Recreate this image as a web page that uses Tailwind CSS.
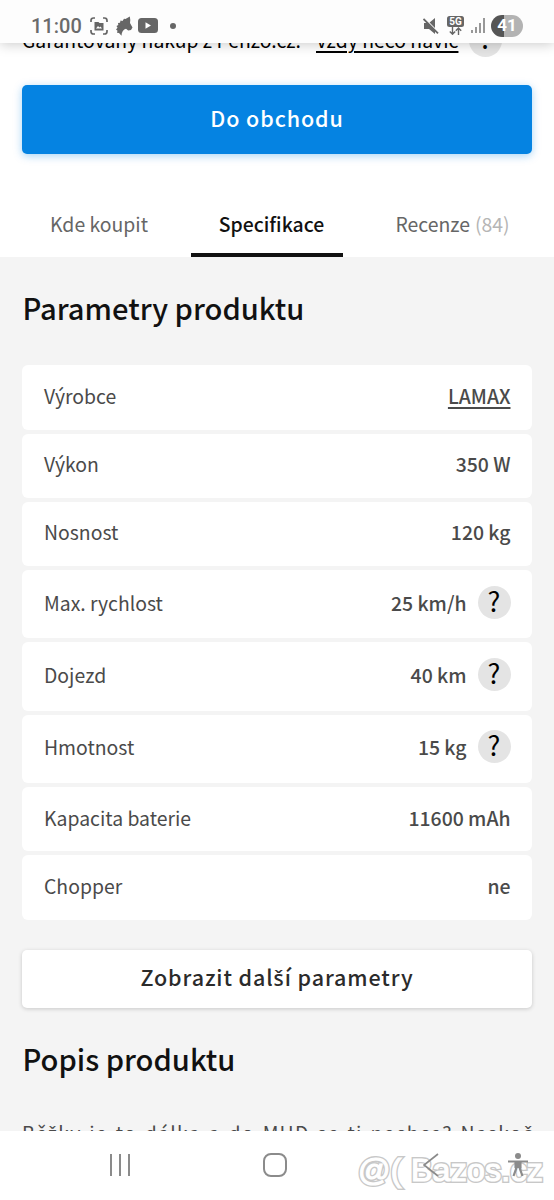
<!DOCTYPE html>
<html lang="cs">
<head>
<meta charset="utf-8">
<title>Parametry produktu</title>
<script src="https://cdn.jsdelivr.net/npm/@tailwindcss/browser@4"></script>
</head>
<body class="w-[554px] h-[1200px] overflow-hidden bg-white font-['Noto_Sans_CJK_JP',sans-serif] text-[#4a4a4a]">
<div class="flex h-[1200px] flex-col">
  <header class="relative z-10 flex h-[43px] shrink-0 items-start justify-between bg-[#fdfdfd] pl-[31px] pr-[31px] shadow-[0_1px_12px_rgba(0,0,0,0.22)]">
    <div class="flex h-[51px] items-center">
      <span class="w-[58px] whitespace-nowrap font-[Roboto] text-[20px] leading-6 font-medium text-[#6b6b6b]">11:00</span>
      <svg class="ml-px" width="18" height="18" viewBox="0 0 18 18" fill="none" stroke="#666" stroke-width="1.7"><path d="M1 5V3.500Q1 1 3.500 1H5M13 1h1.500Q17 1 17 3.500V5M17 13v1.500Q17 17 14.500 17H13M5 17H3.500Q1 17 1 14.500V13"/><path d="M4.500 5h4l1 1h4v7.500h-9z" fill="#666" stroke="none"/><path d="M6 11.500l2-2.500 1.500 1.500 1-1 1.500 2z" fill="#fff" stroke="none"/></svg>
      <svg class="ml-2" width="17" height="20" viewBox="0 0 17 20" fill="#666"><path d="M13.800 0.500L9.500 3 8 2.800 6.500 5 4.500 4.500 4 6.800 2 7 2.300 9 .5 10l1 1.800L0 13.500l1.500 1.200-.5 2 2 .3L5.500 19.800C5.500 16 7.500 13.500 10 12.800l2.200 1.700 2.800-.5 1.500-2.500L14 7 14.300 4z"/></svg>
      <svg class="ml-[5px]" width="20" height="15" viewBox="0 0 20 15"><rect width="20" height="15" rx="3.500" fill="#666"/><path d="M7.500 4.200L13 7.500l-5.500 3.300z" fill="#fff"/></svg>
      <span class="ml-3 size-[6px] rounded-full bg-[#666]"></span>
    </div>
    <div class="flex h-[51px] items-center">
      <svg width="16" height="16" viewBox="0 0 16 16"><path d="M1 5h5l6-5v16l-6-5H1z" fill="#666"/><path d="M1 0l15 15" stroke="#fdfdfd" stroke-width="1.500"/><path d="M0.500 1l14.500 14.300" stroke="#666" stroke-width="1.800"/></svg>
      <div class="ml-2 flex w-[17px] flex-col items-center">
        <span class="flex h-[11px] w-[17px] items-center justify-center rounded-[2.500px] bg-[#666] font-[Roboto] text-[10px] font-bold leading-none text-white">5G</span>
        <svg width="13" height="8" viewBox="0 0 13 8" fill="none" stroke="#666" stroke-width="1.400"><path d="M3.500 0v7M.8 4.500L3.500 7.200 6.200 4.500M9.500 8V1M6.800 3.700L9.500 1l2.700 2.700"/></svg>
      </div>
      <svg class="ml-[7px]" width="14" height="15" viewBox="0 0 14 15" stroke="#777" stroke-width="1.500"><path d="M1 12v3M5 9v6M9 5v10M13 0v15"/></svg>
      <span class="ml-[6px] flex h-[22px] w-[32px] items-center justify-center rounded-full bg-[linear-gradient(90deg,#555_41%,#b3b3b3_41%)] font-[Roboto] text-[17px] font-bold text-white">41</span>
    </div>
  </header>

  <div class="flex h-[42px] shrink-0 items-start overflow-hidden pl-[22px] text-[19.400px] text-black">
    <div class="-mt-[19px] flex h-[32px] items-center whitespace-nowrap">
      <span class="w-[294px]">Garantovaný nákup z Penzo.cz.</span>
      <span class="w-[142px] underline decoration-2 underline-offset-[3px]">Vždy něco navíc</span>
      <span class="ml-[11px] flex size-[33px] items-center justify-center rounded-full bg-[#e4e4e4] text-[24px] leading-none font-medium"><span class="-mt-[3px]">?</span></span>
    </div>
  </div>

  <button class="mx-[22px] h-[69px] shrink-0 rounded-[5px] bg-[#0583e2] pb-[3px] text-[21.500px] font-medium tracking-[0.900px] text-white shadow-[0_2px_8px_rgba(5,131,226,0.35)]">Do obchodu</button>

  <nav class="flex h-[103px] shrink-0 items-end pl-[7px] text-[19.400px] whitespace-nowrap">
    <div class="flex h-[66px] w-[184px] shrink-0 items-center justify-center text-[#666]">Kde koupit</div>
    <div class="flex h-[66px] w-[152px] shrink-0 items-center justify-center border-b-4 border-[#111] pt-1 pl-[9px] font-medium text-[#111]">Specifikace</div>
    <div class="flex h-[66px] w-[211px] shrink-0 items-center justify-center gap-[5px] pl-[8px] text-[#666]">Recenze <span class="text-[#b5b5b5]">(84)</span></div>
  </nav>

  <main class="flex h-[874px] shrink-0 flex-col overflow-hidden bg-[#f4f4f4] px-[22px]">
    <h1 class="h-[108.300px] shrink-0 pl-[0.500px] text-[29.100px] font-medium leading-[100px] text-[#111]">Parametry produktu</h1>
    <dl class="flex flex-col gap-[4px] text-[19.400px] whitespace-nowrap *:flex *:items-center *:justify-between *:rounded-[6px] *:bg-white *:pl-[22px] *:pr-[21.500px] *:pb-[4px] [&_dd]:font-medium">
      <div class="h-[64.300px]"><dt>Výrobce</dt><dd class="underline decoration-2 underline-offset-[3px]">LAMAX</dd></div>
      <div class="h-[64.300px]"><dt>Výkon</dt><dd>350 W</dd></div>
      <div class="h-[64.300px]"><dt>Nosnost</dt><dd>120 kg</dd></div>
      <div class="h-[68.300px]"><dt>Max. rychlost</dt><dd class="flex items-center gap-[11px]">25 km/h <span class="flex size-[33px] items-center justify-center rounded-full bg-[#e4e4e4]"><span class="-mt-[4px] text-[27px] font-normal leading-none text-black">?</span></span></dd></div>
      <div class="h-[68.300px]"><dt>Dojezd</dt><dd class="flex items-center gap-[11px]">40 km <span class="flex size-[33px] items-center justify-center rounded-full bg-[#e4e4e4]"><span class="-mt-[4px] text-[27px] font-normal leading-none text-black">?</span></span></dd></div>
      <div class="h-[68.300px]"><dt>Hmotnost</dt><dd class="flex items-center gap-[11px]">15 kg <span class="flex size-[33px] items-center justify-center rounded-full bg-[#e4e4e4]"><span class="-mt-[4px] text-[27px] font-normal leading-none text-black">?</span></span></dd></div>
      <div class="h-[64.300px]"><dt>Kapacita baterie</dt><dd>11600 mAh</dd></div>
      <div class="h-[64.300px]"><dt>Chopper</dt><dd>ne</dd></div>
    </dl>
    <button class="mt-[30.700px] h-[58px] shrink-0 rounded-[5px] bg-white pb-[4px] text-[21.500px] font-medium tracking-[0.900px] text-[#2b2b2b] shadow-[0_1px_4px_rgba(0,0,0,0.18)]">Zobrazit dal<span class="font-['Noto_Sans'] text-[21px] leading-none">š</span>í parametry</button>
    <h2 class="mt-[28px] h-[46px] shrink-0 pl-[0.500px] text-[29.100px] font-medium leading-[44px] text-[#111]">Popis produktu</h2>
    <p class="mt-[31px] h-[40px] shrink-0 whitespace-nowrap text-[19.400px] leading-[40px] tracking-[1.250px] [word-spacing:2.200px]">Bě<span class="font-['Noto_Sans'] text-[19px]">ž</span>ky je to dálka a do MHD se ti nechce? Nasko<span class="font-['Noto_Sans'] text-[19px]">č</span></p>
  </main>

  <footer class="relative h-[69px] shrink-0 bg-white">
    <span class="absolute left-[358px] top-[19px] whitespace-nowrap font-['Liberation_Sans',sans-serif] text-[32px] leading-[40px] tracking-[0.300px] text-[#c8c8c8] [-webkit-text-stroke:4px_#c8c8c8]" aria-hidden="true">@( Bazos.cz</span>
    <span class="absolute left-[358px] top-[19px] whitespace-nowrap font-['Liberation_Sans',sans-serif] text-[32px] leading-[40px] tracking-[0.300px] text-white [-webkit-text-stroke:1.200px_#ffffff]">@( Bazos.cz</span>
    <div class="relative flex h-[67px] items-center pl-[109px]">
      <svg width="22" height="22" viewBox="0 0 22 22" stroke="#8b8b8b" stroke-width="2"><path d="M2 0v22M11 0v22M20 0v22"/></svg>
      <svg class="ml-[132px]" width="24" height="24" viewBox="0 0 24 24" fill="none" stroke="#8b8b8b" stroke-width="2"><rect x="1" y="1" width="22" height="22" rx="7"/></svg>
      <svg class="ml-[136px]" width="16" height="24" viewBox="0 0 16 24" fill="none" stroke="#8b8b8b" stroke-width="1.700"><path d="M15 1L1 12l14 11"/></svg>
      <svg class="ml-[69px]" width="20" height="24" viewBox="0 0 20 24"><circle cx="10" cy="3" r="3" fill="#8b8b8b"/><path d="M0 8.500h20M8 9v7l-2.500 7M12 9v7l2.500 7" fill="none" stroke="#8b8b8b" stroke-width="2.200"/><path d="M6.500 8h7v7h-7z" fill="#8b8b8b"/></svg>
    </div>
  </footer>
</div>
</body>
</html>
